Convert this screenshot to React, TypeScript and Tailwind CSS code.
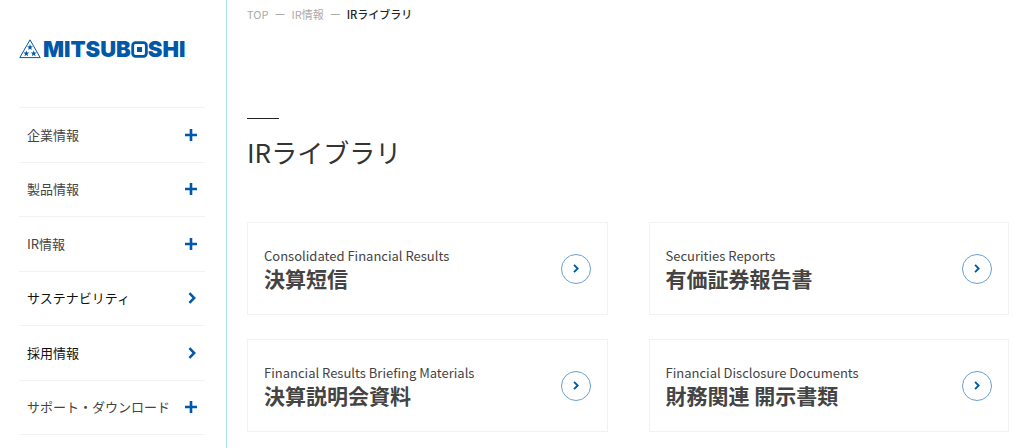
import * as React from 'react';
import { clsx } from 'clsx';

type NavItem = { label: string; kind: 'menu' | 'link' };

const NAV_ITEMS: NavItem[] = [
  { label: '企業情報', kind: 'menu' },
  { label: '製品情報', kind: 'menu' },
  { label: 'IR情報', kind: 'menu' },
  { label: 'サステナビリティ', kind: 'link' },
  { label: '採用情報', kind: 'link' },
  { label: 'サポート・ダウンロード', kind: 'menu' },
];

const LIBRARY = [
  { en: 'Consolidated Financial Results', ja: '決算短信' },
  { en: 'Securities Reports', ja: '有価証券報告書' },
  { en: 'Financial Results Briefing Materials', ja: '決算説明会資料' },
  { en: 'Financial Disclosure Documents', ja: '財務関連 開示書類' },
];

const STAR = 'M0-3.2.8-1.1 3-1 1.2.4 1.9 2.6 0 1.3-1.9 2.6-1.2.4-3-1-.8-1.1Z';

function Logo() {
  return (
    <a href="#" aria-label="MITSUBOSHI" className="flex items-center gap-[2px] text-[#0058a9]">
      <svg viewBox="0 0 22 20" className="h-5 w-[22px] shrink-0" aria-hidden="true">
        <path d="M11 .8 21.2 18.6H.8Z" fill="none" stroke="currentColor" strokeWidth="1" />
        <g fill="currentColor">
          <path d={STAR} transform="translate(11 8.4)" />
          <path d={STAR} transform="translate(7.3 14.6)" />
          <path d={STAR} transform="translate(14.7 14.6)" />
        </g>
      </svg>
      <span className="font-['Inter',sans-serif] text-[22px] leading-5 font-black">
        MITSUB
        <span className="relative">
          O
          <svg
            viewBox="0 0 17 17"
            preserveAspectRatio="none"
            className="absolute inset-x-0 top-[5px] h-[17px] w-full"
            aria-hidden="true"
          >
            <rect width="17" height="17" fill="#fff" />
            <rect x="1.7" y="1.7" width="13.6" height="13.6" rx="2.8" fill="none" stroke="currentColor" strokeWidth="2.8" />
            <rect x="6" y="6" width="5" height="5" fill="currentColor" />
          </svg>
        </span>
        SHI
      </span>
    </a>
  );
}

function PlusIcon() {
  return (
    <svg viewBox="0 0 12 12" className="size-3 shrink-0" aria-hidden="true">
      <path d="M6 0v12M0 6h12" stroke="#0058a9" strokeWidth="2.6" />
    </svg>
  );
}

function ChevronIcon({ className }: { className?: string }) {
  return (
    <svg viewBox="0 0 8 12" className={clsx('shrink-0', className)} aria-hidden="true">
      <path d="M1.4 1.2 6.2 6l-4.8 4.8" fill="none" stroke="#0058a9" strokeWidth="2.5" />
    </svg>
  );
}

function NavRow({ item }: { item: NavItem }) {
  const row = 'flex h-full w-full items-center justify-between px-2 text-left text-[13px] leading-5';

  return (
    <li className="border-b border-[#f2f2f2]">
      {item.kind === 'menu' ? (
        <button type="button" aria-expanded="false" className={clsx(row, 'text-[#444]')}>
          {item.label}
          <PlusIcon />
        </button>
      ) : (
        <a href="#" className={clsx(row, 'text-[#111]')}>
          {item.label}
          <ChevronIcon className="mr-px h-3 w-2" />
        </a>
      )}
    </li>
  );
}

function LibraryCard({ en, ja }: { en: string; ja: string }) {
  return (
    <a
      href="#"
      className="flex items-center justify-between border border-[#f2f2f2] px-4 py-[22px] text-[#444]"
    >
      <span className="flex flex-col pb-[2px]">
        <span className="text-[13px] leading-[22px]">{en}</span>
        <span className="text-[21px] leading-[23px] font-bold">{ja}</span>
      </span>
      <span className="flex size-[30px] shrink-0 items-center justify-center rounded-full border border-[#6a9fd0]">
        <ChevronIcon className="h-[9px] w-[6px]" />
      </span>
    </a>
  );
}

export default function App() {
  return (
    <div className="flex min-h-screen bg-white font-['Noto_Sans_CJK_JP',sans-serif]">
      <aside className="w-[227px] shrink-0 border-r border-[#b0dff0] pt-[39px] pr-[21px] pl-[19px]">
        <Logo />
        <nav className="mt-12">
          <ul className="grid min-h-[328px] auto-rows-fr border-t border-[#f2f2f2]">
            {NAV_ITEMS.map((item) => (
              <NavRow key={item.label} item={item} />
            ))}
          </ul>
        </nav>
      </aside>

      <main className="min-w-0 flex-1 pr-[15px] pl-5">
        <nav aria-label="パンくず" className="pt-1">
          <ol className="flex gap-[6px] text-[11px] leading-5 text-[#aaa]">
            <li>
              <a href="#">TOP</a>
            </li>
            <li aria-hidden="true">ー</li>
            <li>
              <a href="#">IR情報</a>
            </li>
            <li aria-hidden="true">ー</li>
            <li aria-current="page" className="font-medium text-[#222]">
              IRライブラリ
            </li>
          </ol>
        </nav>

        <div className="mt-[94px] w-8 border-t border-[#222]" />
        <h1 className="mt-4 text-[26px] leading-[34px] text-[#333]">IRライブラリ</h1>

        <div className="mt-[53px] grid grid-cols-2 gap-x-[41px] gap-y-6">
          {LIBRARY.map((item) => (
            <LibraryCard key={item.ja} en={item.en} ja={item.ja} />
          ))}
        </div>
      </main>
    </div>
  );
}
